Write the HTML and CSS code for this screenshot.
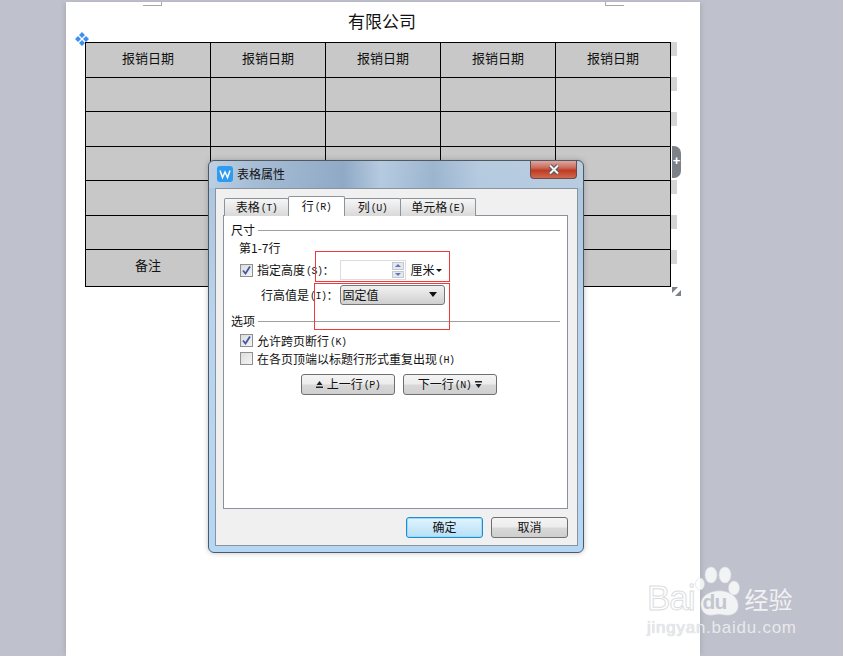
FILE: index.html
```html
<!DOCTYPE html>
<html lang="zh">
<head>
<meta charset="utf-8">
<title>表格属性</title>
<link rel="stylesheet" href="styles.css">
</head>
<body>
<div class="page">
  <span class="crop crop-l"></span><span class="crop crop-r"></span>
  <h1 class="doc-title">有限公司</h1>
  <svg class="move" width="14" height="14" viewBox="0 0 14 14"><g fill="#3f8fef"><path d="M7 0l3 3-3 3-3-3zM7 8l3 3-3 3-3-3zM0 7l3-3 3 3-3 3zM8 7l3-3 3 3-3 3z"/></g></svg>
  <table class="doc-table">
    <colgroup><col class="c1"><col class="c2"><col class="c2"><col class="c2"><col class="c2"></colgroup>
    <tr class="r35"><td>报销日期</td><td>报销日期</td><td>报销日期</td><td>报销日期</td><td>报销日期</td></tr>
    <tr class="r34"><td></td><td></td><td></td><td></td><td></td></tr>
    <tr class="r35"><td></td><td></td><td></td><td></td><td></td></tr>
    <tr class="r34"><td></td><td></td><td></td><td></td><td></td></tr>
    <tr class="r35"><td></td><td></td><td></td><td></td><td></td></tr>
    <tr class="r34"><td></td><td></td><td></td><td></td><td></td></tr>
    <tr class="r37"><td>备注</td><td></td><td></td><td></td><td></td></tr>
  </table>
  <div class="handles">
    <i></i><i></i><i></i><i class="h-gap"></i><i></i><i></i><i></i>
  </div>
  <div class="add-col">+</div>
  <svg class="resize" width="9" height="9" viewBox="0 0 9 9"><path d="M0 0h6L0 6zM9 9H3l6-6z" fill="#7d8288"/></svg>
</div>

<section class="dialog">
  <header class="titlebar">
    <svg class="app-icon" width="16" height="16" viewBox="0 0 16 16"><rect width="16" height="16" rx="3" fill="#2f9bf0"/><path d="M3 4.500l2.500 7L8 6l2.500 5.500 2.500-7" fill="none" stroke="#fff" stroke-width="1.500"/></svg>
    <span class="title-text">表格属性</span>
    <button class="close"><svg width="14" height="11" viewBox="0 0 14 11"><path d="M3 1.500l8 8M11 1.500l-8 8" stroke="#555a60" stroke-width="4"/><path d="M3 1.500l8 8M11 1.500l-8 8" stroke="#f4f4f4" stroke-width="2"/></svg></button>
  </header>
  <div class="client">
    <nav class="tabs">
      <span class="tab t1">表格<small>(T)</small></span>
      <span class="tab active">行<small>(R)</small></span>
      <span class="tab t3">列<small>(U)</small></span>
      <span class="tab t4">单元格<small>(E)</small></span>
    </nav>
    <div class="panel">
      <div class="legend"><span>尺寸</span><hr></div>
      <div class="row-range">第1-7行</div>
      <div class="field-row">
        <span class="check on"><svg width="11" height="11" viewBox="0 0 11 11"><path d="M2 5.500l2.500 3L9 1.500" fill="none" stroke="#3f57a8" stroke-width="1.800"/></svg></span>
        <span class="lbl">指定高度<small>(S)</small>：</span>
        <span class="spin"><span class="spin-btns"><b class="up"></b><b class="down"></b></span></span>
        <span class="unit">厘米</span><i class="mini-caret"></i>
      </div>
      <div class="field-row type-row">
        <span class="lbl">行高值是<small>(I)</small>：</span>
        <span class="select"><span>固定值</span><i class="caret"></i></span>
      </div>
      <div class="legend opt"><span>选项</span><hr></div>
      <div class="check-row"><span class="check on"><svg width="11" height="11" viewBox="0 0 11 11"><path d="M2 5.500l2.500 3L9 1.500" fill="none" stroke="#3f57a8" stroke-width="1.800"/></svg></span><span>允许跨页断行<small>(K)</small></span></div>
      <div class="check-row"><span class="check"></span><span>在各页顶端以标题行形式重复出现<small>(H)</small></span></div>
      <div class="nav-btns">
        <button class="btn nav"><svg class="arr" width="7" height="7" viewBox="0 0 7 7"><path d="M3.500 0l3 4H.5zM0 5.500h7V7H0z" fill="#222"/></svg><span>上一行<small>(P)</small></span></button>
        <button class="btn nav"><span>下一行<small>(N)</small></span><svg class="arr" width="7" height="7" viewBox="0 0 7 7"><path d="M3.500 7l-3-4h6zM0 0h7v1.500H0z" fill="#222"/></svg></button>
      </div>
    </div>
    <footer class="actions">
      <button class="btn ok">确定</button>
      <button class="btn cancel">取消</button>
    </footer>
  </div>
  <div class="red red-a"></div>
  <div class="red red-b"></div>
</section>

<div class="mark">
  <div class="mark-top"><span class="mark-bai">Bai</span>
    <span class="paw"><svg width="50" height="54" viewBox="0 0 50 54"><g fill="#fff" fill-opacity=".8" stroke="#d9dbe0" stroke-width=".6"><ellipse cx="17" cy="9" rx="6" ry="8"/><ellipse cx="31" cy="9" rx="6" ry="8"/><ellipse cx="40" cy="22" rx="5.500" ry="7"/><ellipse cx="6" cy="18" rx="4.500" ry="6"/><path d="M7 38c0-8 8-12 16-13 9-1 20 4 21 13 1 8-5 12-13 11-5-1-8-1-12 0-7 1-12-3-12-11z"/></g></svg><span class="paw-du">du</span></span>
    <span class="mark-jy">经验</span></div>
  <div class="mark-url">jingyan.baidu.com</div>
</div>
</body>
</html>
```
FILE: styles.css
```css
* { box-sizing: border-box; }
html, body { margin: 0; height: 100%; overflow: hidden; }
body { background: #bfc2cd; font-family: "Noto Sans CJK SC", "Liberation Sans", sans-serif; position: relative; }

.page { position: absolute; left: 66px; top: 2px; width: 634px; height: 654px; background: #fff; box-shadow: -3px 0 4px -1px #aeb1bb, 3px 0 4px -1px #aeb1bb; padding: 40px 0 0 19px; }
.crop { position: absolute; top: 0; width: 19px; height: 4px; border-bottom: 1px solid #a8a8a8; }
.crop-l { left: 77px; border-right: 1px solid #a8a8a8; }
.crop-r { left: 539px; border-left: 1px solid #a8a8a8; }
.doc-title { position: absolute; left: 0; right: 0; top: 8px; margin: 0; text-align: center; font-size: 17px; line-height: 22px; font-weight: 400; color: #111; padding-right: 2px; }
.move { position: absolute; left: 9px; top: 30px; }

.doc-table { border-collapse: collapse; table-layout: fixed; width: 586px; background: #c8c8c8; font-size: 13px; color: #111; }
.doc-table td { border: 1px solid #000; padding: 0 0 5px; text-align: center; line-height: 16px; }
.c1 { width: 125px; }
.c2 { width: 115px; }
.r35 { height: 35px; }
.r34 { height: 34px; }
.r37 { height: 37px; }
.r37 td { padding-bottom: 6px; }

.handles { position: absolute; left: 605px; top: 40px; display: flex; flex-direction: column; gap: 21px; }
.handles i { display: block; width: 6px; height: 14px; background: #d4d4d4; }
.handles .h-gap { visibility: hidden; height: 12px; }
.add-col { position: absolute; left: 606px; top: 144px; width: 9px; height: 32px; background: #7d8288; border-radius: 0 7px 7px 0; color: #fff; font: 700 13px/30px "Liberation Sans", sans-serif; text-align: center; }
.resize { position: absolute; left: 606px; top: 285px; }

.dialog { position: absolute; left: 208px; top: 160px; width: 376px; height: 393px; border: 1px solid #4d5a66; border-radius: 6px; background: linear-gradient(180deg, #b4c8dc 0, #aec6de 8%, #b9d4ee 40%, #b5d7f5 100%); box-shadow: 0 0 5px rgba(60,70,90,.35); padding: 0 5px 6px 6px; display: flex; flex-direction: column; }
.titlebar { height: 27px; flex: none; display: flex; align-items: center; gap: 4px; padding: 0 0 2px 8px; background: linear-gradient(90deg, rgba(255,255,255,.15), rgba(140,165,195,.3) 12%, rgba(110,140,175,.5) 36%, rgba(190,210,230,.3) 46%, rgba(130,160,190,.45) 60%, rgba(190,210,230,.3) 72%, rgba(255,255,255,.1)); margin: 0 -5px 0 -6px; border-radius: 6px 6px 0 0; position: relative; }
.title-text { font-size: 12px; line-height: 14px; color: #111; }
.close { position: absolute; right: 6px; top: 0; width: 47px; height: 18px; padding: 0; border: 1px solid #6b4a48; border-top: 0; border-radius: 0 0 4px 4px; background: linear-gradient(180deg, #e0a79e 0, #c96a5a 40%, #c03a22 55%, #cf6a50 100%); display: flex; align-items: center; justify-content: center; }

.client { flex: 1; background: #f0f0f0; border: 1px solid #8a929b; padding: 7px 9px 0 7px; display: flex; flex-direction: column; }
.tabs { display: flex; height: 20px; flex: none; align-items: flex-end; position: relative; z-index: 1; margin: 0 0 -1px 1px; font-size: 12px; color: #111; }
.tab { height: 18px; margin-right: -1px; border: 1px solid #8c939b; border-bottom: 0; background: linear-gradient(180deg, #f6f6f6, #d9d9d9); line-height: 15px; text-align: center; border-radius: 2px 2px 0 0; white-space: nowrap; }
.t1 { width: 65px; }
.t3 { width: 57px; }
.t4 { width: 76px; }
.tab.active { width: 57px; height: 20px; background: #fff; position: relative; z-index: 2; line-height: 17px; }

.panel { height: 294px; flex: none; background: #fff; border: 1px solid #8c939b; padding: 6px 7px 0 7px; font-size: 12px; color: #111; }
small { font: 10px "Liberation Mono", monospace; letter-spacing: -.5px; margin-left: 1px; vertical-align: 1px; }
.legend { display: flex; align-items: center; gap: 3px; height: 16px; line-height: 14px; }
.legend hr { flex: 1; margin: 0; border: 0; border-top: 1px solid #a0a0a0; }
.row-range { margin: 2px 0 0 8px; height: 18px; line-height: 16px; }
.field-row { display: flex; align-items: center; margin-top: 2px; height: 20px; padding-left: 9px; }
.lbl { margin-left: 4px; white-space: nowrap; line-height: 16px; padding-bottom: 1px; }
.check { width: 13px; height: 13px; flex: none; border: 1px solid #8e8f8f; background: linear-gradient(135deg, #dcdcdc, #f4f4f4); display: inline-flex; align-items: center; justify-content: center; }
.spin { width: 66px; height: 20px; margin-left: 5px; border: 1px solid #d9dde2; background: #fff; display: flex; justify-content: flex-end; align-items: center; padding-right: 1px; }
.spin-btns { width: 12px; height: 16px; display: flex; flex-direction: column; gap: 1px; }
.spin-btns b { flex: 1; background: #e4e7ec; border: 1px solid #c4c9d0; position: relative; }
.spin-btns b::after { content: ""; position: absolute; left: 2px; border: 3px solid transparent; }
.up::after { top: -2px; border-bottom-color: #6376b4 !important; }
.down::after { top: 1px; border-top-color: #6376b4 !important; }
.unit { margin-left: 5px; line-height: 16px; padding-bottom: 1px; }
.mini-caret { margin-left: 1px; border: 3px solid transparent; border-top-color: #111; border-bottom: 0; }
.type-row { margin-top: 4px; padding-left: 30px; height: 22px; }
.type-row .lbl { margin-left: 0; }
.select { width: 105px; height: 20px; margin-left: 1px; border: 1px solid #777; border-radius: 3px; background: linear-gradient(180deg, #f2f2f2, #cfcfcf); display: flex; align-items: center; justify-content: space-between; padding: 0 7px 1px 2px; font-size: 12px; line-height: 14px; }
.caret { border: 4px solid transparent; border-top: 5px solid #111; border-bottom: 0; }
.legend.opt { margin-top: 7px; }
.check-row { display: flex; align-items: center; gap: 4px; height: 18px; padding-left: 9px; line-height: 15px; }
.legend.opt + .check-row { margin-top: 2px; }
.nav-btns { display: flex; gap: 8px; margin: 7px 0 0 70px; }
.btn { font: 12px/14px "Noto Sans CJK SC", sans-serif; color: #111; padding: 0 0 2px; border: 1px solid #6f6f6f; border-radius: 3px; background: linear-gradient(180deg, #f4f4f4 0, #ececec 48%, #d8d8d8 52%, #cfcfcf 100%); }
.nav { width: 94px; height: 21px; display: flex; align-items: center; justify-content: center; gap: 4px; }
.arr { margin-top: 2px; }

.actions { flex: 1; display: flex; justify-content: flex-end; gap: 8px; padding: 8px 0 0; }
.actions .btn { width: 77px; height: 21px; }
.ok { border-color: #1c8ccf; box-shadow: inset 0 0 0 1px #9ddcf8; background: linear-gradient(180deg, #e2f4fd, #b5e0f7); }

.red { position: absolute; border: 1px solid #f23a3a; pointer-events: none; }
.red-a { left: 106px; top: 90px; width: 135px; height: 31px; }
.red-b { left: 105px; top: 122px; width: 136px; height: 47px; }

.mark { position: absolute; left: 647px; top: 566px; width: 160px; color: rgba(255,255,255,.8); }
.mark-top { display: flex; align-items: flex-end; height: 46px; }
.mark-bai { font: 400 35px/40px "Liberation Sans", sans-serif; letter-spacing: -1px; color: #fff; -webkit-text-stroke: 1px #dcdde0; margin: 0 -1px -6px 0; }
.paw { position: relative; display: block; width: 50px; height: 54px; margin-bottom: -8px; flex: none; }
.paw svg { display: block; }
.paw-du { position: absolute; left: 9px; top: 24px; font: 700 21px/24px "Liberation Sans", sans-serif; color: #c4c6cf; letter-spacing: -1px; }
.mark-jy { font-size: 24px; line-height: 30px; margin: 0 0 -2px 1px; }
.mark-url { font: 17px/20px "Liberation Sans", sans-serif; margin-top: 6px; letter-spacing: .75px; white-space: nowrap; color: #e9eaee; text-shadow: 0 0 1px #b9bbc2; }
```
